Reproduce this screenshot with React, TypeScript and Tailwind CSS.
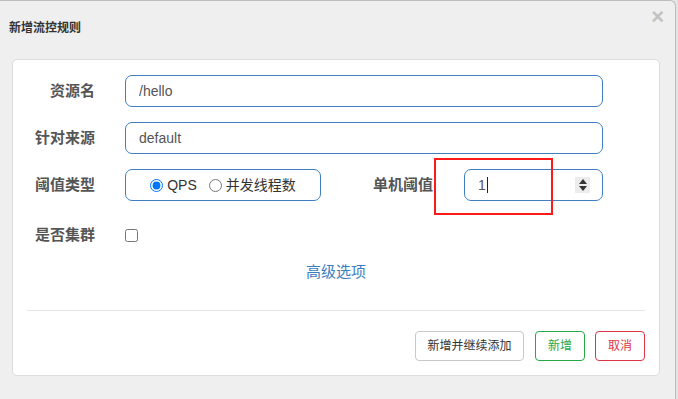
import React from 'react';

const labelCls = "w-[82px] shrink-0 text-right text-[15px] font-bold text-[#555] leading-[32px]";

// spinner arrows of the number field
const Spinner = () => (
	<div className="w-[15px] h-[16px] bg-[#ececec] flex flex-col items-center justify-center gap-[2px]">
		<svg width="8" height="5" viewBox="0 0 8 5"><path d="M4 0 L8 5 L0 5 Z" fill="#333" /></svg>
		<svg width="8" height="5" viewBox="0 0 8 5"><path d="M0 0 L8 0 L4 5 Z" fill="#333" /></svg>
	</div>
);

export default function App() {
	return (
		<div className="w-[678px] h-[399px] bg-[#e4e4e4] flex overflow-hidden font-['Liberation_Sans','Noto_Sans_CJK_SC',sans-serif]">
			<div className="w-[676px] h-[400px] bg-[#efefef] border-t border-r border-[#bdbdbd] rounded-tr-[6px]">
				{/* header */}
				<div className="relative h-[58px]">
					<h4 className="absolute left-[9px] top-[17px] text-[12px] leading-[20px] font-bold text-[#333]">新增流控规则</h4>
					<span className="absolute right-[11px] top-[2px] text-[22px] leading-[28px] font-bold text-[#c2c2c2]">×</span>
				</div>

				{/* form panel */}
				<div className="relative ml-[12px] w-[648px] h-[317px] bg-white border border-[#dcdcdc] rounded-[5px] pt-[15px]">
					<div className="flex items-center">
						<label className={labelCls}>资源名</label>
						<input
							readOnly
							defaultValue="/hello"
							className="ml-[30px] w-[478px] h-[32px] px-[13px] border border-[#3f7fc1] rounded-[7px] text-[14px] text-[#555] outline-none"
						/>
					</div>
					<div className="flex items-center mt-[15px]">
						<label className={labelCls}>针对来源</label>
						<input
							readOnly
							defaultValue="default"
							className="ml-[30px] w-[478px] h-[32px] px-[13px] border border-[#3f7fc1] rounded-[7px] text-[14px] text-[#555] outline-none"
						/>
					</div>
					<div className="flex items-center mt-[15px]">
						<label className={labelCls}>阈值类型</label>
						<div className="ml-[30px] w-[196px] h-[32px] border border-[#3f7fc1] rounded-[7px] flex items-center justify-center text-[14px] text-[#333]">
							<label className="flex items-center">
								<input type="radio" name="grade" defaultChecked className="w-[13px] h-[13px] m-0 accent-[#0075ff]" />
								<span className="ml-[4px]">QPS</span>
							</label>
							<label className="flex items-center ml-[12px]">
								<input type="radio" name="grade" className="w-[13px] h-[13px] m-0" />
								<span className="ml-[4px]">并发线程数</span>
							</label>
						</div>
						<label className="w-[112px] text-right text-[15px] font-bold text-[#555] leading-[32px]">单机阈值</label>
						<div className="ml-[31px] w-[139px] h-[32px] border border-[#3f7fc1] rounded-[7px] flex items-center pl-[13px] pr-[12px] text-[14px] text-[#555]">
							<span>1</span>
							<span className="w-px h-[16px] bg-[#222] ml-[1px]" />
							<div className="flex-1" />
							<Spinner />
						</div>
					</div>
					<div className="flex items-center mt-[18px]">
						<label className={labelCls}>是否集群</label>
						<input type="checkbox" className="ml-[30px] w-[13px] h-[13px] m-0" />
					</div>
					<div className="mt-[11px] text-center text-[15px] leading-[20px] text-[#3e7cc0]">高级选项</div>
					<div className="mx-[14px] mt-[28px] border-t border-[#e5e5e5]" />
					<div className="flex justify-end items-center gap-[10px] mt-[20px] pr-[14px] text-[12px]">
						<button className="mr-[1px] w-[109px] h-[30px] border border-[#c8c8c8] rounded-[4px] bg-white text-[#333]">新增并继续添加</button>
						<button className="w-[50px] h-[30px] border border-[#28a745] rounded-[4px] bg-white text-[#28a745]">新增</button>
						<button className="w-[50px] h-[30px] border border-[#dc3545] rounded-[4px] bg-white text-[#dc3545]">取消</button>
					</div>

					{/* red highlight box */}
					<div className="absolute left-[421px] top-[98px] w-[119px] h-[57px] border-2 border-[#ff1a1a] pointer-events-none" />
				</div>
			</div>
		</div>
	);
}
